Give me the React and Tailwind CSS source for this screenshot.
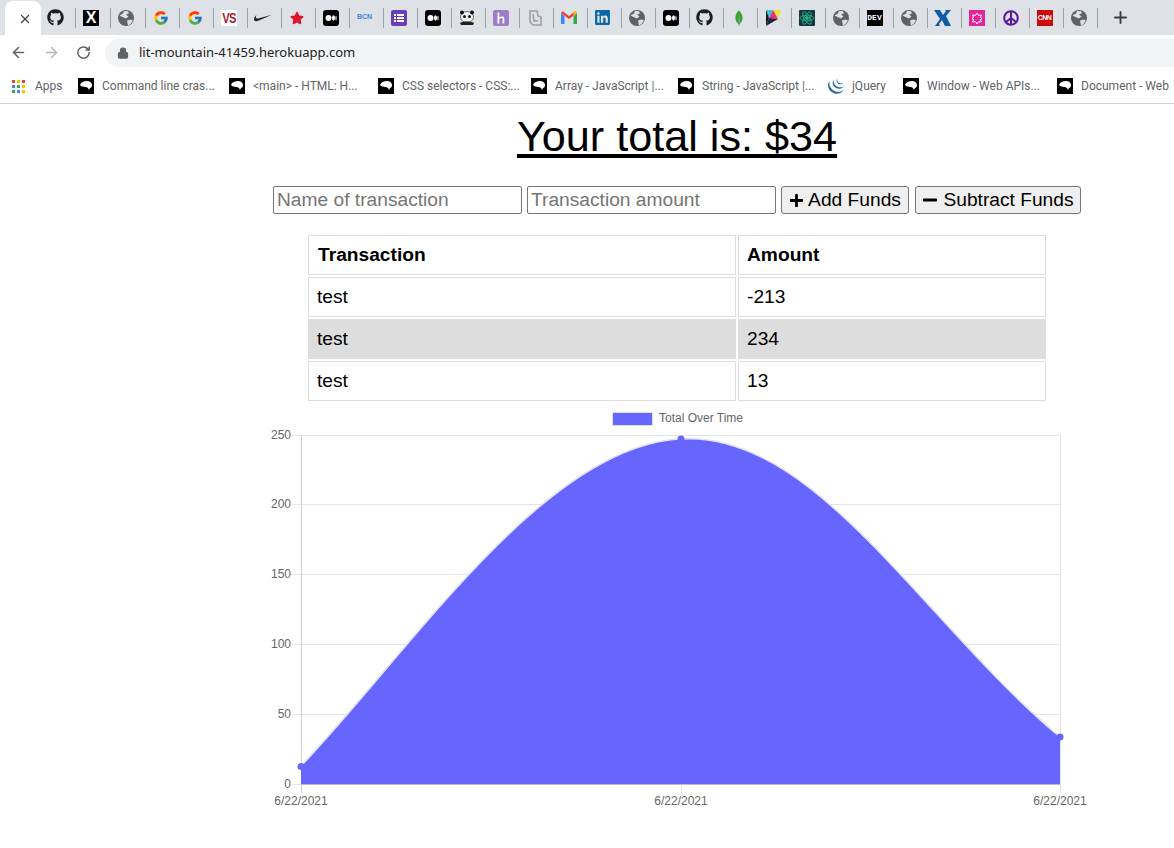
import { FaGithub, FaLinkedin, FaPlus, FaMinus, FaPeace, FaStar } from 'react-icons/fa'
import { FcGoogle } from 'react-icons/fc'
import { SiNike, SiMongodb, SiJquery } from 'react-icons/si'
import { ArrowLeft, ArrowRight, RotateCw, Lock, X, Plus } from 'lucide-react'

const Globe = () => (
  <svg width="16" height="16" viewBox="0 0 16 16">
    <circle cx="8" cy="8" r="8" fill="#5f6368" />
    <path d="M1.500 5.500 5 3.500 6 1l4 .2 1 2-3 1.300L10.500 6.500 8 8.500 4.500 7zM9 10.500l3.500-1 2.500 1-2.500 3.500L10 15.500z" fill="#dee1e6" />
  </svg>
)

const XBox = () => (
  <div className="w-4 h-4 bg-black flex items-center justify-center text-white text-[16px] font-bold leading-none font-['Liberation_Sans']">X</div>
)

const VS = () => (
  <div className="w-4 h-4 bg-white flex items-center justify-center overflow-hidden">
    <span className="text-[#a81c2e] text-[15px] font-bold leading-none tracking-[-1px] font-['Liberation_Sans'] scale-x-75">VS</span>
  </div>
)

const Medium = () => (
  <svg width="16" height="16" viewBox="0 0 16 16">
    <rect width="16" height="16" rx="3" fill="#000" />
    <ellipse cx="5.500" cy="8" rx="3" ry="3" fill="#fff" />
    <ellipse cx="10.500" cy="8" rx="1.500" ry="2.800" fill="#fff" />
    <ellipse cx="13" cy="8" rx=".6" ry="2.500" fill="#fff" />
  </svg>
)

const Bcn = () => <span className="text-[7px] font-bold text-[#3f87d6] font-['Liberation_Sans']">BCN</span>

const ListBox = () => (
  <svg width="16" height="16" viewBox="0 0 16 16">
    <rect width="16" height="16" rx="2" fill="#6a3fb5" />
    <path d="M3 4h2v2H3zM6 4h7v2H6zM3 7h2v2H3zM6 7h7v2H6zM3 10h2v2H3zM6 10h7v2H6z" fill="#fff" />
  </svg>
)

const Panda = () => (
  <svg width="18" height="16" viewBox="0 0 18 16">
    <ellipse cx="9" cy="7" rx="6.500" ry="5.500" fill="#f4f4f4" stroke="#333" strokeWidth=".7" />
    <circle cx="4" cy="2.500" r="2" fill="#111" />
    <circle cx="14" cy="2.500" r="2" fill="#111" />
    <circle cx="6.500" cy="6.500" r="1.500" fill="#111" />
    <circle cx="11.500" cy="6.500" r="1.500" fill="#111" />
    <path d="M2 13c3-2 11-2 14 0l-1 2H3z" fill="#222" />
  </svg>
)

const Heroku = () => (
  <svg width="16" height="16" viewBox="0 0 16 16">
    <rect width="16" height="16" rx="2" fill="#9a7fc7" />
    <path d="M4.500 2.500h1.800v4.800c2-.9 5-1.300 5 1.200v5h-1.800V8.800c0-1-1.500-.8-3.200 0v4.700H4.500z" fill="#fff" />
  </svg>
)

const Doc = () => (
  <svg width="16" height="16" viewBox="0 0 16 16" fill="none" stroke="#9a9ea3" strokeWidth="1.500">
    <path d="M3 1h7l1 5 3 1v8H6L3 12z" />
    <path d="M6 4l1 7h4" />
  </svg>
)

const Gmail = () => (
  <svg width="16" height="13" viewBox="0 0 16 13">
    <path d="M0 2v11h3.500V5z" fill="#4285f4" />
    <path d="M16 2v11h-3.500V5z" fill="#34a853" />
    <path d="M0 2l1.500-2L8 5l6.500-5L16 2 8 8z" fill="#ea4335" />
    <path d="M12.500 5L16 2l-1.500-2-2 1.500z" fill="#fbbc04" />
  </svg>
)

const Tri = () => (
  <svg width="16" height="16" viewBox="0 0 16 16">
    <path d="M1 0h7L4 8z" fill="#35c4d8" />
    <path d="M8 0h8l-3 9z" fill="#f2e02e" />
    <path d="M1 0l3 8-3 8z" fill="#1a1a1a" />
    <path d="M4 8l4-8 5 9z" fill="#e0308a" />
    <path d="M1 16l3-8 9 1z" fill="#23233f" />
  </svg>
)

const ReactBox = () => (
  <svg width="16" height="16" viewBox="0 0 16 16" fill="none" stroke="#1fbf94" strokeWidth=".8">
    <rect width="16" height="16" rx="1" fill="#16343c" stroke="none" />
    <ellipse cx="8" cy="8" rx="7" ry="2.800" />
    <ellipse cx="8" cy="8" rx="7" ry="2.800" transform="rotate(60 8 8)" />
    <ellipse cx="8" cy="8" rx="7" ry="2.800" transform="rotate(120 8 8)" />
    <circle cx="8" cy="8" r="1.400" fill="#1fbf94" />
  </svg>
)

const Dev = () => (
  <div className="w-4 h-4 bg-black flex items-center justify-center text-white text-[8px] font-bold leading-none font-['Liberation_Mono']">DEV</div>
)

const BlueX = () => (
  <svg width="17" height="16" viewBox="0 0 17 16">
    <path d="M0 0h6l3 5 3-4-1-1h6l-5 6 5 10h-6L8 10l-3 4 1 2H1l5-7z" fill="#0f5aa6" />
  </svg>
)

const PinkBox = () => (
  <svg width="16" height="16" viewBox="0 0 16 16">
    <rect width="16" height="16" fill="#e5249b" />
    <path d="M8 3l1.500 2.400L12.500 5l-1 2.500 1.500 1-1.500 1 1 2.500-3-.4L8 14l-1.500-2.400-3 .4 1-2.500L3 8.500l1.500-1-1-2.500 3 .4z" fill="none" stroke="#fff" strokeWidth="1" />
  </svg>
)

const Cnn = () => (
  <div className="w-4 h-4 bg-[#cc0a0a] flex items-center justify-center text-white text-[7px] font-bold leading-none tracking-[-0.5px] font-['Liberation_Sans']">CNN</div>
)

const FAVICONS = [
  <FaGithub size={17} color="#1b1f23" />,
  <XBox />,
  <Globe />,
  <FcGoogle size={16} />,
  <FcGoogle size={16} />,
  <VS />,
  <SiNike size={18} color="#222" />,
  <FaStar size={14} color="#e0142a" />,
  <Medium />,
  <Bcn />,
  <ListBox />,
  <Medium />,
  <Panda />,
  <Heroku />,
  <Doc />,
  <Gmail />,
  <FaLinkedin size={17} color="#0a66a8" />,
  <Globe />,
  <Medium />,
  <FaGithub size={17} color="#1b1f23" />,
  <SiMongodb size={16} color="#3fa037" />,
  <Tri />,
  <ReactBox />,
  <Globe />,
  <Dev />,
  <Globe />,
  <BlueX />,
  <PinkBox />,
  <FaPeace size={16} color="#5a1a9c" />,
  <Cnn />,
  <Globe />,
]

const Mdn = () => (
  <svg width="16" height="16" viewBox="0 0 16 16" className="shrink-0">
    <rect width="16" height="16" fill="#000" />
    <path d="M2 7c1-3 4-4 7-4s5 2 5 4c0 2-1 3-2 3l-1 2-1-2-2-1c-1 0-2 0-3-.5-1 0-2 0-3-1.500z" fill="#fff" />
  </svg>
)

const Apps = () => (
  <div className="grid grid-cols-3 gap-[2px] w-[13px] shrink-0">
    {['#ea4335', '#fbbc04', '#ea4335', '#4285f4', '#34a853', '#fbbc04', '#34a853', '#4285f4', '#fbbc04'].map((c, i) => (
      <div key={i} className="w-[3px] h-[3px]" style={{ backgroundColor: c }} />
    ))}
  </div>
)

const BOOKMARKS = [
  { label: 'Command line cras...', w: 151 },
  { label: '<main> - HTML: H...', w: 149 },
  { label: 'CSS selectors - CSS:...', w: 153 },
  { label: 'Array - JavaScript |...', w: 147 },
  { label: 'String - JavaScript |...', w: 150 },
]

const ROWS = [
  { name: 'test', value: '-213' },
  { name: 'test', value: '234', shaded: true },
  { name: 'test', value: '13' },
]

function Chrome() {
  return (
    <div className="font-['Noto_Sans',sans-serif]">
      <div className="h-[35px] bg-[#dee1e6] flex pl-[5px] overflow-hidden">
        <div className="w-[36px] h-[35px] mt-px bg-white rounded-t-lg flex items-center justify-center pl-[4px] shrink-0">
          <X size={14} strokeWidth={2.2} color="#3c4043" />
        </div>
        <div className="flex items-center">
          {FAVICONS.map((icon, i) => (
            <div
              key={i}
              className={`h-5 flex items-center justify-center shrink-0 ${i === 1 || i === 2 ? 'w-[35px]' : 'w-[34px]'} ${i === 0 ? 'pr-[6px]' : 'pr-[4px] border-l border-[#9aa0a6]'}`}
            >
              {icon}
            </div>
          ))}
          <div className="w-px h-5 bg-[#9aa0a6] shrink-0" />
          <div className="w-[46px] flex justify-center pr-[2px] shrink-0">
            <Plus size={19} strokeWidth={2.4} color="#3c4043" />
          </div>
        </div>
      </div>
      <div className="h-[33px] bg-white flex items-center pl-[10px] mt-px">
        <ArrowLeft size={17} strokeWidth={2.2} color="#5f6368" />
        <ArrowRight size={17} strokeWidth={2.2} color="#b4b7bb" className="ml-[16px]" />
        <RotateCw size={15} strokeWidth={2.4} color="#5f6368" className="ml-[16px]" />
        <div className="ml-[14px] flex-1 h-[28px] bg-[#f1f3f4] rounded-l-full flex items-center pl-[12px] text-[13px] text-[#202124]">
          <Lock size={12} fill="#5f6368" color="#5f6368" strokeWidth={2.500} />
          <span className="ml-[10px]">lit-mountain-41459.herokuapp.com</span>
        </div>
      </div>
      <div className="h-[35px] bg-white border-b border-[#d0d2d5] flex items-center pl-[12px] font-['Roboto',sans-serif] text-[12px] text-[#5f6368] whitespace-nowrap overflow-hidden">
        <Apps />
        <span className="ml-[10px] w-[43px] shrink-0">Apps</span>
        {BOOKMARKS.map((b) => (
          <div key={b.label} className="flex items-center gap-2 shrink-0" style={{ width: b.w }}>
            <Mdn />
            <span>{b.label}</span>
          </div>
        ))}
        <div className="flex items-center gap-2 shrink-0 w-[75px]">
          <SiJquery size={16} color="#2a6ea5" />
          <span>jQuery</span>
        </div>
        <div className="flex items-center gap-2 shrink-0 w-[154px]">
          <Mdn />
          <span>Window - Web APIs...</span>
        </div>
        <div className="flex items-center gap-2 shrink-0">
          <Mdn />
          <span>Document - Web</span>
        </div>
      </div>
    </div>
  )
}

const X_POS = [301, 681, 1060]
const Y_TICKS = [
  { label: '250', y: 435 },
  { label: '200', y: 504 },
  { label: '150', y: 574 },
  { label: '100', y: 644 },
  { label: '50', y: 714 },
  { label: '0', y: 784 },
]

// svg coordinates are offset by the chart's left edge
function Chart() {
  const left = 262
  const top = 405
  const curve = 'M301 766C410 652 545 445 681 439C815 430 925 625 1060 737'
  return (
    <svg width="830" height="415" viewBox={`${left} ${top} 830 415`} className="block font-['Liberation_Sans']">
      {Y_TICKS.map((t) => (
        <g key={t.label}>
          <line x1="292" x2="1060.500" y1={t.y + 0.5} y2={t.y + 0.5} stroke="#e5e5e5" />
          <text x="291" y={t.y + 4} textAnchor="end" fontSize="12" fill="#666">{t.label}</text>
        </g>
      ))}
      {X_POS.map((x, i) => (
        <g key={x}>
          <line x1={x + 0.5} x2={x + 0.5} y1="435" y2="793" stroke={i === 0 ? '#cfcfcf' : '#e5e5e5'} />
          <text x={x} y="805" textAnchor="middle" fontSize="12" fill="#666">6/22/2021</text>
        </g>
      ))}
      <path d={`${curve}L1060 784L301 784Z`} fill="#6666ff" />
      <path d={curve} fill="none" stroke="#e0e0ff" strokeWidth="1.500" />
      <line x1="301" x2="1060.500" y1="784.500" y2="784.500" stroke="#b9b9c9" />
      <circle cx="301" cy="766.500" r="3.500" fill="#6666ff" />
      <circle cx="681" cy="439" r="3.500" fill="#6666ff" />
      <circle cx="1060" cy="737" r="3.500" fill="#6666ff" />
      <rect x="612.500" y="412.500" width="40" height="13" fill="#6666ff" stroke="#e0e0ff" />
      <text x="659" y="422" fontSize="12" fill="#666">Total Over Time</text>
    </svg>
  )
}

export default function App() {
  return (
    <div className="w-[1174px] h-[848px] overflow-hidden bg-white text-black">
      <Chrome />
      <main className="pl-[180px] flex flex-col items-center font-['Liberation_Sans',sans-serif]">
        <h1 className="text-[43.2px] leading-[52px] underline mt-[6px]">Your total is: $34</h1>
        <div className="flex items-center mt-[24px] text-[19.2px]">
          <input placeholder="Name of transaction" className="w-[249px] h-[28px] border border-[#767676] rounded-[2px] px-[3px] placeholder:text-[#757575]" />
          <input placeholder="Transaction amount" className="w-[249px] h-[28px] border border-[#767676] rounded-[2px] px-[3px] ml-[5px] placeholder:text-[#757575]" />
          <button className="w-[128px] h-[28px] border border-[#767676] rounded-[3px] bg-[#efefef] flex items-center justify-center gap-[4px] ml-[5px]">
            <FaPlus size={15} />
            Add Funds
          </button>
          <button className="w-[166px] h-[28px] border border-[#767676] rounded-[3px] bg-[#efefef] flex items-center justify-center gap-[5px] ml-[6px]">
            <FaMinus size={16} />
            Subtract Funds
          </button>
        </div>
        <table className="mt-[19px] w-[742px] border-separate border-spacing-[2px] text-[19.2px] leading-[23px] text-left">
          <thead>
            <tr>
              <th className="w-[428px] h-[40px] border border-[#dddddd] pl-[9px] pb-[2px] font-bold">Transaction</th>
              <th className="h-[40px] border border-[#dddddd] pl-[8px] pb-[2px] font-bold">Amount</th>
            </tr>
          </thead>
          <tbody>
            {ROWS.map((r) => (
              <tr key={r.value} className={r.shaded ? 'bg-[#dddddd]' : ''}>
                <td className="h-[40px] border border-[#dddddd] pl-[8px] pb-[2px]">{r.name}</td>
                <td className="h-[40px] border border-[#dddddd] pl-[8px] pb-[2px]">{r.value}</td>
              </tr>
            ))}
          </tbody>
        </table>
        <div className="mt-[2px]">
          <Chart />
        </div>
      </main>
    </div>
  )
}
